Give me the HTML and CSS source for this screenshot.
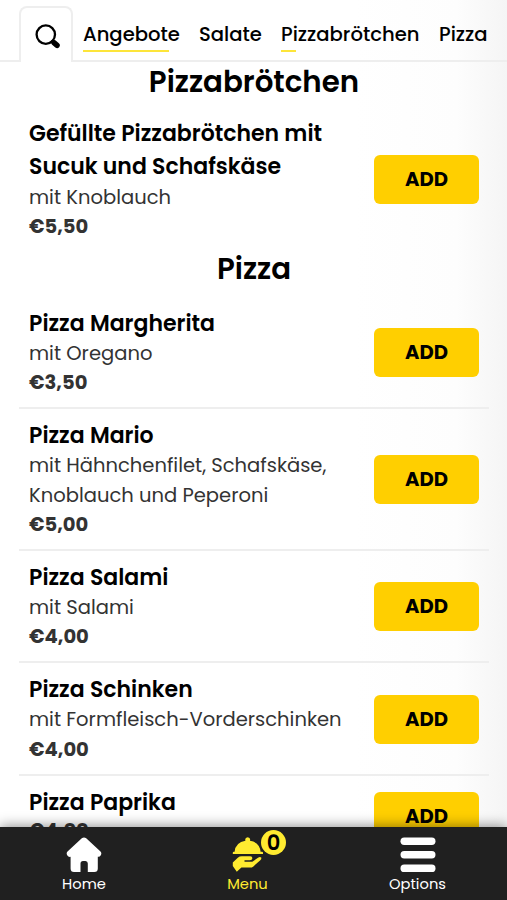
FILE: index.html
```
<!DOCTYPE html>
<html lang="de">
<head>
<meta charset="utf-8">
<meta name="viewport" content="width=device-width, initial-scale=1">
<title>Menu</title>
<link rel="stylesheet" href="styles.css">
</head>
<body>
<div class="app">
  <header class="tabs">
    <button class="search" aria-label="Suche">
      <svg width="26" height="26" viewBox="0 0 26 26" fill="none" stroke="#000" stroke-linecap="round"><circle cx="10.8" cy="10.6" r="9.2" stroke-width="2.3"/><path d="M17.4 17.2l2 2" stroke-width="2.8"/><path d="M18.9 18.6l3.2 2.8" stroke-width="5.4"/></svg>
    </button>
    <nav class="links">
      <a class="link angebote">Angebote</a>
      <a class="link salate">Salate</a>
      <a class="link broetchen">Pizzabrötchen</a>
      <a class="link pizza">Pizza</a>
    </nav>
  </header>
  <main class="menu">
    <h2 class="heading">Pizzabrötchen</h2>
    <article class="item last">
      <div class="info"><h3>Gefüllte Pizzabrötchen mit<br>Sucuk und Schafskäse</h3><p>mit Knoblauch</p><strong>€5,50</strong></div>
      <button class="add">ADD</button>
    </article>
    <h2 class="heading second">Pizza</h2>
    <article class="item">
      <div class="info"><h3>Pizza Margherita</h3><p>mit Oregano</p><strong>€3,50</strong></div>
      <button class="add">ADD</button>
    </article>
    <article class="item">
      <div class="info"><h3>Pizza Mario</h3><p>mit Hähnchenfilet, Schafskäse,<br>Knoblauch und Peperoni</p><strong>€5,00</strong></div>
      <button class="add">ADD</button>
    </article>
    <article class="item">
      <div class="info"><h3>Pizza Salami</h3><p>mit Salami</p><strong>€4,00</strong></div>
      <button class="add">ADD</button>
    </article>
    <article class="item">
      <div class="info"><h3>Pizza Schinken</h3><p>mit Formfleisch-Vorderschinken</p><strong>€4,00</strong></div>
      <button class="add">ADD</button>
    </article>
    <article class="item paprika">
      <div class="info"><h3>Pizza Paprika</h3><strong>€4,00</strong></div>
      <button class="add">ADD</button>
    </article>
  </main>
  <footer class="bar">
    <a class="tab home">
      <svg width="36" height="36" viewBox="0 0 36 36" fill="#fff"><path d="M15.8 1.2Q18 -.4 20.2 1.2L34.5 14.4Q36 16 34.8 18.2Q33.7 20.2 31.8 19.8V31.5Q31.8 35 28.3 35H21.8V26.5Q21.8 24 19.5 24H17Q14.5 24 14.5 26.5V35H8Q4.6 35 4.6 31.5V19.8Q2.4 20.3 1.2 18.2Q0 16 1.5 14.4Z"/></svg>
      <span>Home</span>
    </a>
    <a class="tab active">
      <svg width="32" height="36" viewBox="0 0 32 36" fill="#ffeb30"><path d="M2.6 14.8Q3.6 5.3 13.4 3.8Q12.6 .5 15.7 .3Q18.8 .5 18 3.8Q27.6 5.3 28.6 14.8H30Q31 14.8 31 15.8V17H.8V15.8Q.8 14.8 1.8 14.8Z"/><path d="M.8 25.5L5.8 20.7Q7.5 19.3 9.7 19.3H18.2Q20.4 19.5 20.4 21.3Q20.2 23.2 17.8 23.2H12.5V24.8H20.3L26 20.8Q28 19.5 29.2 20.6Q29.8 21.8 28.3 23.3L21.4 29.4Q20 30.6 18 30.6H9.4L4.8 34.8L.8 29Z"/></svg>
      <span>Menu</span>
      <b class="badge">0</b>
    </a>
    <a class="tab options">
      <svg width="36" height="36" viewBox="0 0 36 36" fill="#fff"><rect x=".5" y=".5" width="35" height="7.5" rx="3.7"/><rect x=".5" y="14" width="35" height="7.5" rx="3.7"/><rect x=".5" y="27.6" width="35" height="7.5" rx="3.7"/></svg>
      <span>Options</span>
    </a>
  </footer>
</div>
</body>
</html>
```
FILE: styles.css
```
* { box-sizing: border-box; }
body { margin: 0; font-family: Poppins, Inter, sans-serif; font-feature-settings: "cv11"; color: #000; background: #fff; }
h2, h3, p { margin: 0; }
button { font: inherit; font-feature-settings: inherit; color: inherit; border: 0; padding: 0; }
svg { display: block; }
.app { height: 900px; overflow: hidden; display: flex; flex-direction: column; background: linear-gradient(to right, #fff 70%, #fdfdfd 90%, #f5f5f5 100%); }
.tabs { height: 62px; flex: none; display: flex; padding: 6px 0 0 19px; border-bottom: 2px solid #eee; }
.search { width: 54px; height: 56px; border: 2px solid #eee; border-bottom: 0; border-radius: 8px 8px 0 0; background: #fff; display: flex; padding: 16px 0 0 14px; }
.links { display: flex; gap: 20px; padding: 13px 0 0 10px; font-size: 19.6px; line-height: 31px; font-weight: 500; white-space: nowrap; }
.link { height: 33px; background: linear-gradient(#fde53a, #fde53a) 0 100% / 0 2px no-repeat; }
.angebote { width: 96px; background-size: 86px 2px; }
.salate { width: 62px; }
.broetchen { width: 138px; background-size: 15px 2px; }
.menu { flex: 1; min-height: 0; overflow: hidden; padding: 0 18px 0 19px; }
.heading { height: 44px; padding-top: 2px; font-size: 29.3px; line-height: 35px; font-weight: 600; text-align: center; }
.second { height: 46px; padding-top: 0; }
.item { display: flex; justify-content: space-between; align-items: center; padding: 10px 10px 9px; border-bottom: 2px solid #eee; height: 112.4px; white-space: nowrap; }
.item.last { height: 145px; border: 0; }
.item:nth-of-type(3) { height: 141.7px; }
.item.paprika { height: 83px; border: 0; padding: 8px 10px 9px; }
.info h3 { font-size: 22px; line-height: 33px; font-weight: 600; }
.info p { margin: -1px 0 0; font-size: 19.55px; line-height: 29.3px; color: #333; }
.info strong { display: block; margin-bottom: 1px; font-size: 19.55px; line-height: 29.3px; font-weight: 700; color: #333; }
.last .info p { margin-top: 0; }
.last .info strong { margin-bottom: 0; }
.paprika .info strong { margin-top: -3px; margin-bottom: 3px; }
.add { width: 105px; height: 49px; flex: none; border-radius: 6px; background: #ffcf00; padding-bottom: 1px; font-size: 19.6px; font-weight: 700; }
.bar { height: 73px; flex: none; display: flex; background: #202020; position: relative; box-shadow: 0 -1px 12px rgba(0,0,0,.45); color: #fff; font-size: 14.7px; line-height: 20px; }
.tab { flex: none; display: flex; flex-direction: column; align-items: center; padding-top: 10px; gap: 1px; position: relative; }
.home { width: 168px; }
.active { width: 159px; color: #ffeb30; }
.options { width: 181px; }
.badge { position: absolute; left: 93px; top: 3px; width: 25px; height: 25px; border-radius: 50%; background: #ffeb30; color: #000; font-size: 21px; line-height: 26px; text-align: center; font-weight: 600; }
```
